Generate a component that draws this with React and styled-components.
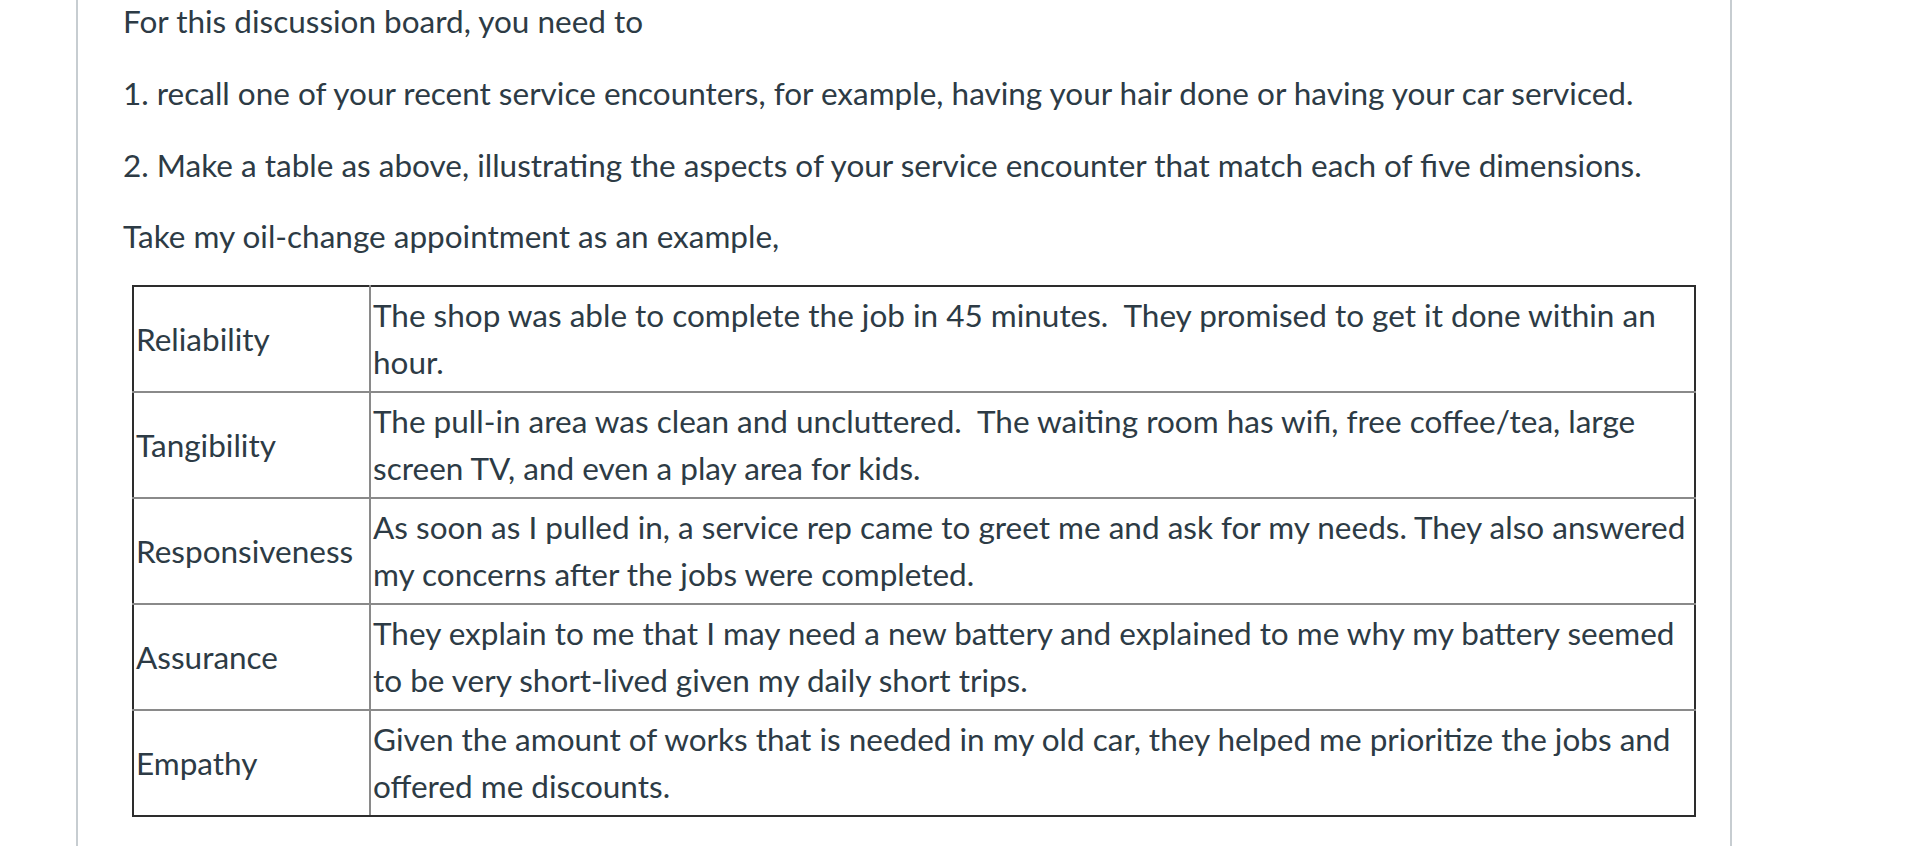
import React from 'react';
import styled, { createGlobalStyle } from 'styled-components';

const GlobalStyle = createGlobalStyle`
  html, body {
    margin: 0;
    padding: 0;
    background: #fff;
  }
  body {
    font-family: Lato, "Open Sans", sans-serif;
    color: #2d3b45;
  }
`;

const Page = styled.div`
  margin-left: 76px;
  width: 1656px;
  min-height: 846px;
  border-left: 2px solid #c7cdd1;
  border-right: 2px solid #c7cdd1;
  padding-left: 45px;
  box-sizing: border-box;
  overflow: hidden;
`;

const Content = styled.div`
  margin-top: -2px;
`;

const Para = styled.p`
  margin: 0 0 24.5px;
  font-size: 31.5px;
  line-height: 47.25px;
`;

const Table = styled.table`
  margin-left: 9px;
  width: 1564px;
  border-collapse: collapse;
  font-size: 31.5px;
  line-height: 47.25px;
  color: #2d3b45;
`;

const Cell = styled.td`
  border: 2px solid #8a8a8a;
  padding: 5px 2px 4.5px;
  vertical-align: middle;
  width: ${(p) => (p.$label ? '231px' : 'auto')};
  white-space: ${(p) => (p.$label ? 'nowrap' : 'normal')};

  &:first-child {
    border-left-color: #2d2d2d;
  }
  &:last-child {
    border-right-color: #2d2d2d;
  }
  tr:first-child > & {
    border-top-color: #2d2d2d;
  }
  tr:last-child > & {
    border-bottom-color: #2d2d2d;
  }
`;

const rows = [
  ['Reliability', 'The shop was able to complete the job in 45 minutes.\u00a0 They promised to get it done within an hour.'],
  ['Tangibility', 'The pull-in area was clean and uncluttered.\u00a0 The waiting room has wifi, free coffee/tea, large screen TV, and even a play area for kids.'],
  ['Responsiveness', 'As soon as I pulled in, a service rep came to greet me and ask for my needs. They also answered my concerns after the jobs were completed.'],
  ['Assurance', 'They explain to me that I may need a new battery and explained to me why my battery seemed to be very short-lived given my daily short trips.'],
  ['Empathy', 'Given the amount of works that is needed in my old car, they helped me prioritize the jobs and offered me discounts.'],
];

const App = () => {
  return (
    <>
      <GlobalStyle />
      <Page>
        <Content>
          <Para>For this discussion board, you need to</Para>
          <Para>1. recall one of your recent service encounters, for example, having your hair done or having your car serviced.</Para>
          <Para>2. Make a table as above, illustrating the aspects of your service encounter that match each of five dimensions.</Para>
          <Para>Take my oil-change appointment as an example,</Para>
          <Table>
            <tbody>
              {rows.map(([label, text]) => (
                <tr key={label}>
                  <Cell $label>{label}</Cell>
                  <Cell>{text}</Cell>
                </tr>
              ))}
            </tbody>
          </Table>
        </Content>
      </Page>
    </>
  );
};

export default App;
